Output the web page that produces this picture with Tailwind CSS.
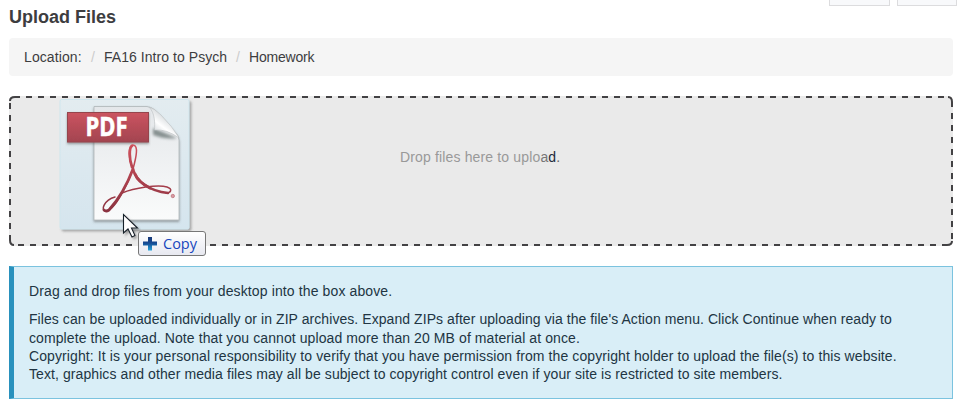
<!DOCTYPE html>
<html lang="en"><head><meta charset="utf-8"><title>Upload Files</title>
<script src="https://cdn.jsdelivr.net/npm/@tailwindcss/browser@4"></script></head>
<body class="w-[960px] h-[404px] overflow-hidden bg-white text-[#3d3d3f] text-[14px] font-['Liberation_Sans',Arial,sans-serif]">
<div class="relative h-[404px] px-[9px] pr-[7px]">
  <div class="absolute top-0 right-[3px] flex gap-[7px]">
    <div class="w-[61px] h-[6px] border border-t-0 border-[#dcdcde] bg-[#f8f9fb]"></div>
    <div class="w-[60px] h-[6px] border border-t-0 border-[#dcdcde] bg-[#f8f9fb]"></div>
  </div>
  <h1 class="h-[38px] pt-[6px] text-[18px] leading-[22px] font-bold">Upload Files</h1>
  <nav class="h-[38px] rounded-[4px] bg-[#f5f5f5] pl-[15px] flex items-center whitespace-nowrap">
    <span class="w-[67px] tracking-[0.1px]">Location:</span><span class="w-[13px] text-[#ccc]">/</span>
    <span class="w-[132px] tracking-[0.05px]">FA16 Intro to Psych</span><span class="w-[13px] text-[#ccc]">/</span><span class="tracking-[-0.2px]">Homework</span>
  </nav>
  <section class="relative mt-[20px] h-[150px]">
    <svg class="absolute inset-0" width="944" height="150" viewBox="0 0 944 150" fill="none">
      <rect width="944" height="150" rx="5" fill="#eaeaea"/>
      <g stroke="#434244" stroke-width="2"><path d="M17 1H938" stroke-dasharray="6 6"/><path d="M9 149H932" stroke-dasharray="6 6"/><path d="M1 7V134" stroke-dasharray="6 6"/><path d="M943 17V144" stroke-dasharray="6 6"/><path d="M1 5Q1 1 6 1H11M939 1Q943 1 943 6V11M1 139V144Q1 149 5 149M933 149H938Q943 149 943 145"/></g>
    </svg>
    <p class="relative pl-[391px] pt-[52px] leading-[18px] text-[#999] tracking-[0.15px]">Drop files here to uplo<span class="text-[#777]">a</span><span class="text-[#222b3b]">d</span><span class="text-[#666]">.</span></p>
  </section>
  <section class="mt-[20px] h-[133px] border border-[#7bc3df] border-l-[5px] border-l-[#2991bd] bg-[#d9eef7] pl-[15px] pt-[15px] text-[#213543] leading-[18.3px] whitespace-nowrap">
    <p class="tracking-[0.12px]">Drag and drop files from your desktop into the box above.</p>
    <p class="mt-[10px]"><span class="tracking-[0.065px]">Files can be uploaded individually or in ZIP archives. Expand ZIPs after uploading via the file's Action menu. Click Continue when ready to</span><br><span class="tracking-[0.09px]">complete the upload. Note that you cannot upload more than 20 MB of material at once.</span><br><span class="tracking-[0.097px]">Copyright: It is your personal responsibility to verify that you have permission from the copyright holder to upload the file(s) to this website.</span><br><span class="tracking-[0.083px]">Text, graphics and other media files may all be subject to copyright control even if your site is restricted to site members.</span></p>
  </section>
  <svg class="absolute left-[50px] top-[90px]" width="170" height="175" viewBox="0 0 170 175">
    <defs>
      <linearGradient id="tile" x1="0" y1="0" x2="0" y2="1"><stop stop-color="#e3ecf0"/><stop offset="1" stop-color="#d5e5ee"/></linearGradient>
      <linearGradient id="red" x1="0" y1="0" x2="0" y2="1"><stop stop-color="#cb5460"/><stop offset="1" stop-color="#a34450"/></linearGradient>
      <linearGradient id="sheet" x1="0" y1="0" x2="0" y2="1"><stop stop-color="#e4e7ea"/><stop offset="1" stop-color="#fafbfb"/></linearGradient>
      <linearGradient id="curl" gradientUnits="userSpaceOnUse" x1="106" y1="42" x2="116" y2="29"><stop stop-color="#d9dde0"/><stop offset=".5" stop-color="#fff"/><stop offset="1" stop-color="#dfe2e4"/></linearGradient>
      <linearGradient id="sym" gradientUnits="userSpaceOnUse" x1="0" y1="54" x2="0" y2="122"><stop stop-color="#d0505c"/><stop offset="1" stop-color="#8b3341"/></linearGradient>
      <linearGradient id="plus" x1="0" y1="0" x2="0" y2="1"><stop stop-color="#173777"/><stop offset=".45" stop-color="#154a93"/><stop offset="1" stop-color="#25a5dc"/></linearGradient>
      <linearGradient id="tip" x1="0" y1="0" x2="0" y2="1"><stop stop-color="#fff"/><stop offset="1" stop-color="#e7e8f0"/></linearGradient>
      <filter id="shade" x="-20%" y="-20%" width="140%" height="140%"><feDropShadow dx="2" dy="2" stdDeviation="1" flood-color="#666" flood-opacity=".5"/></filter>
      <filter id="low" x="-20%" y="-20%" width="140%" height="140%"><feDropShadow dx="0" dy="1.500" stdDeviation=".8" flood-color="#444" flood-opacity=".5"/></filter>
      <filter id="soft" x="-30%" y="-30%" width="160%" height="160%"><feGaussianBlur stdDeviation="1.700"/></filter>
    </defs>
    <rect x="10" y="9.500" width="129" height="129.500" rx="1.500" fill="url(#tile)" stroke="#d0e6ee" filter="url(#shade)"/>
    <path d="M44 16.500H97Q102 17 106 21L126 43Q129 46 129 50V130H44Z" fill="url(#sheet)" stroke="#aeb5b8" stroke-width=".8" filter="url(#low)"/>
    <path d="M103 38L127 48Q117 50 103 45Z" fill="#65716f" opacity=".75" filter="url(#soft)"/>
    <path d="M99 17C105 23 105 33 104.500 40Q117 39 129 48Q123 37 111 25Q104 18 99 17Z" fill="url(#curl)" stroke="#b8bdbf" stroke-width=".6"/>
    <rect x="17.500" y="22.500" width="81" height="29.500" fill="url(#red)" stroke="#95444e" filter="url(#low)"/>
    <text x="35.500" y="46" textLength="42" lengthAdjust="spacingAndGlyphs" fill="#fff" stroke="#fff" stroke-width=".6" font-family="Open Sans" font-size="26.500" font-weight="700">PDF</text>
    <g fill="none" stroke="url(#sym)" stroke-linecap="round" stroke-linejoin="round">
      <path d="M83 79C78 68 78 55 83 55C89 55 86 68 83 79" stroke-width="1.500"/>
      <path d="M82 77C79 68 79 58 82 56" stroke-width="2.700"/>
      <path d="M83 79C78 93 65 121 56 121C50 121 54 110 65 107" stroke-width="1.500"/>
      <path d="M83 79C77 95 68 110 59 120Q56 122 54 120" stroke-width="2.800"/>
      <path d="M72 103C84 98 108 94 117 97C123 99 121 103 116 103" stroke-width="1.500"/>
      <path d="M83 79C86 91 99 101 118 103" stroke-width="2.500"/>
      <path d="M85 84Q88 92 100 98" stroke-width="3"/>
    </g>
    <circle cx="122.800" cy="106" r="1.700" fill="#d99ca3" stroke="#b76b75" stroke-width=".7"/>
    <path d="M73.500 124.500V143L78 139L82 147L85 145.500L81.500 138H87.500Z" fill="#fff" stroke="#17202a" stroke-width="1.100" filter="url(#shade)"/>
    <rect x="88.500" y="141.500" width="67" height="24" rx="2.500" fill="url(#tip)" stroke="#777"/>
    <path d="M98 147H102V151.500H107V155.500H102V160.500H98V155.500H93V151.500H98Z" fill="url(#plus)"/>
    <text x="113" y="159" textLength="34" lengthAdjust="spacingAndGlyphs" fill="#1746bd" font-family="Open Sans" font-size="15">Copy</text>
  </svg>
</div></body></html>
